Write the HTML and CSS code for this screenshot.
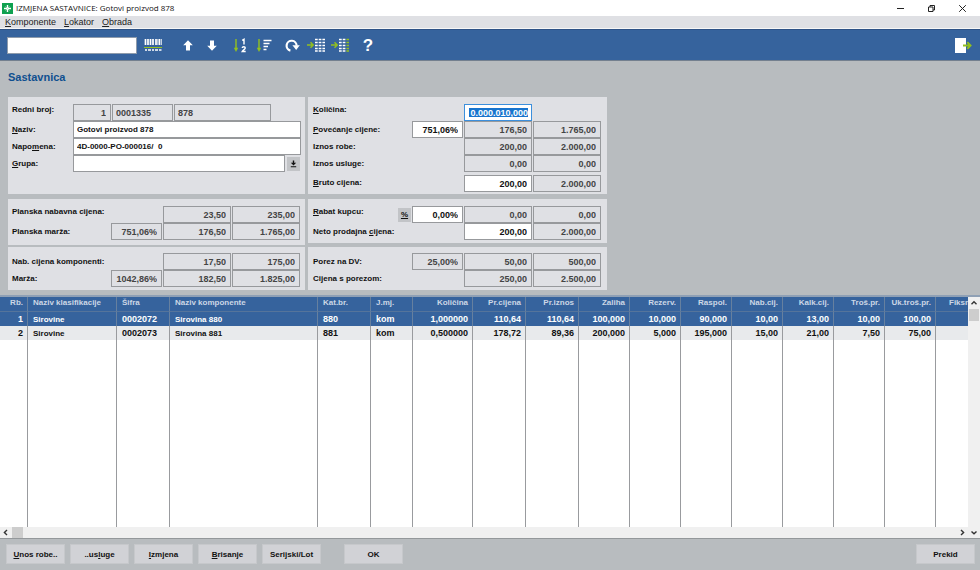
FILE: index.html
```
<!DOCTYPE html>
<html lang="hr">

<head>
  <meta charset="UTF-8" />
  <meta name="viewport" content="width=device-width, initial-scale=1.0" />
  <title>Izmjena sastavnice</title>
  <link rel="stylesheet" href="styles.css">
</head>

<body>
  <header class="titlebar">
    <svg class="logo" width="11" height="11" viewBox="0 0 11 11">
      <rect width="11" height="11" fill="#0fa150" />
      <path d="M5.5 2v7M2 5.5h7" stroke="#fff" stroke-width="1.4" />
      <path d="M3.6 3.6l3.8 3.8M7.4 3.6L3.6 7.4" stroke="#b5e6c8" stroke-width="0.9" />
    </svg>
    <h1>IZMJENA SASTAVNICE: Gotovi proizvod 878</h1>
    <div class="window-buttons">
      <button type="button" aria-label="Minimize">
        <svg width="9" height="9" viewBox="0 0 9 9"><path d="M1 4.5h7" stroke="#222" /></svg>
      </button>
      <button type="button" aria-label="Restore">
        <svg width="9" height="9" viewBox="0 0 9 9"><path d="M1.5 3h4.5v4.5H1.5zM3 3V1.5h4.5V6H6" fill="none" stroke="#222" /></svg>
      </button>
      <button type="button" aria-label="Close">
        <svg width="9" height="9" viewBox="0 0 9 9"><path d="M1.2 1.2l6.6 6.6M7.8 1.2L1.2 7.8" stroke="#222" /></svg>
      </button>
    </div>
  </header>

  <nav class="menubar">
    <a href="#"><u>K</u>omponente</a>
    <a href="#"><u>L</u>okator</a>
    <a href="#"><u>O</u>brada</a>
  </nav>

  <div class="toolbar">
    <input type="text" class="search" aria-label="Lokator">
    <div class="tools">
      <button type="button" aria-label="Barkod">
        <svg width="18" height="12" viewBox="0 0 18 12">
          <path d="M1.5 0v6M4 0v6M6.5 0v6M9 0v6M12 0v6M15.5 0v6" stroke="#fff" stroke-width="1.7" />
          <path d="M13.8 0v6M17.4 0v6" stroke="#fff" stroke-width="0.8" />
          <path d="M0 8.5h18" stroke="#93c01f" stroke-width="1" />
          <path d="M1 11h2M4 11h3M8 11h2M11 11h3M15 11h2.5" stroke="#fff" stroke-width="1.6" />
        </svg>
      </button>
    </div>
    <div class="tools tools-move">
      <button type="button" aria-label="Gore">
        <svg width="10" height="11" viewBox="0 0 10 11"><path d="M5 0.3L9.8 5.2H7v5.3H3V5.2H0.2z" fill="#fff" /></svg>
      </button>
      <button type="button" aria-label="Dolje">
        <svg width="10" height="11" viewBox="0 0 10 11"><path d="M5 10.7L0.2 5.8H3V0.5h4v5.3h2.8z" fill="#fff" /></svg>
      </button>
    </div>
    <div class="tools">
      <button type="button" aria-label="Sortiraj po broju">
        <svg width="14" height="15" viewBox="0 0 14 15">
          <path d="M3 1v11" stroke="#93c01f" stroke-width="1.4" />
          <path d="M0.8 9.8h4.4L3 14z" fill="#93c01f" />
          <path d="M9.2 2.3l1.8-1v5.2M9.2 10c.2-1.6 3.2-1.6 3 .1-.2 1.2-2.2 2-3 3.4h3.5" fill="none" stroke="#fff" stroke-width="1.4" />
        </svg>
      </button>
      <button type="button" aria-label="Sortiraj">
        <svg width="16" height="15" viewBox="0 0 16 15">
          <path d="M3 1v11" stroke="#93c01f" stroke-width="1.4" />
          <path d="M0.8 9.8h4.4L3 14z" fill="#93c01f" />
          <path d="M7.5 2.5h8M7.5 5.5h6M7.5 8.5h4.5M7.5 11.5h3" stroke="#fff" stroke-width="1.5" />
        </svg>
      </button>
    </div>
    <div class="tools">
      <button type="button" aria-label="Osvje&zcaron;i">
        <svg width="15" height="13" viewBox="0 0 15 13">
          <path d="M5.4 11.6A5 5 0 1 1 11.6 6.8" fill="none" stroke="#fff" stroke-width="2.2" />
          <path d="M7.4 6.2h7.4L11.2 11z" fill="#fff" />
        </svg>
      </button>
      <button type="button" aria-label="Uvoz">
        <svg width="18" height="14" viewBox="0 0 18 14">
          <path d="M0 7h5.5M3.5 4.3L6.2 7 3.5 9.7" fill="none" stroke="#93c01f" stroke-width="1.5" />
          <path d="M8 1.5h10M8 4.5h10M8 7.5h10M8 10.5h10M8 13h10" stroke="#fff" stroke-width="1.6" stroke-dasharray="2.7 1" />
        </svg>
      </button>
      <button type="button" aria-label="Uvoz odabranih">
        <svg width="18" height="14" viewBox="0 0 18 14">
          <path d="M0 7h5.5M3.5 4.3L6.2 7 3.5 9.7" fill="none" stroke="#93c01f" stroke-width="1.5" />
          <path d="M8 1.5h6.4M8 4.5h6.4M8 7.5h6.4M8 10.5h6.4M8 13h6.4" stroke="#fff" stroke-width="1.6" stroke-dasharray="2.7 1" />
          <path d="M15.4 1.5H18M15.4 4.5H18M15.4 7.5H18M15.4 10.5H18M15.4 13H18" stroke="#93c01f" stroke-width="1.6" />
        </svg>
      </button>
    </div>
    <div class="tools">
      <button type="button" class="help" aria-label="Pomo&cacute;">?</button>
    </div>
    <div class="tools tools-exit">
      <button type="button" aria-label="Izlaz">
        <svg width="17" height="15" viewBox="0 0 17 15">
          <rect width="11" height="15" fill="#fff" />
          <path d="M8 7.5h7.5M12.3 4.2l3.3 3.3-3.3 3.3" fill="none" stroke="#93c01f" stroke-width="1.8" />
        </svg>
      </button>
    </div>
  </div>

  <main>
    <h2>Sastavnica</h2>

    <form class="panels">
      <div class="side">
        <section class="panel panel-top item">
          <label class="raised" for="rb">Redni broj:</label>
          <div class="codes">
            <input id="rb" class="num" type="text" value="1" readonly>
            <input class="code" type="text" value="0001335" aria-label="Šifra" readonly>
            <input class="code" type="text" value="878" aria-label="Kat.br." readonly>
          </div>
          <label for="naziv"><u>N</u>aziv:</label>
          <input id="naziv" type="text" value="Gotovi proizvod 878">
          <label for="napomena">Napo<u>m</u>ena:</label>
          <input id="napomena" type="text" value="4D-0000-PO-000016/&nbsp; 0">
          <label for="grupa"><u>G</u>rupa:</label>
          <div class="group">
            <input id="grupa" type="text">
            <button type="button" aria-label="Odaberi grupu">
              <svg width="7" height="8" viewBox="0 0 7 8"><path d="M2.8 0.5h1.4v2.3h2L3.5 5.6 0.8 2.8h2zM0.8 6.2h5.4v1H0.8z" fill="#111" /></svg>
            </button>
          </div>
        </section>

        <section class="panel panel-plan amounts">
          <label class="raised" for="pnc">Planska nabavna cijena:</label>
          <input id="pnc" class="num price" type="text" value="23,50" readonly>
          <input class="num" type="text" value="235,00" aria-label="Planska nabavna cijena iznos" readonly>
          <label for="pm">Planska marža:</label>
          <input id="pm" class="num" type="text" value="751,06%" readonly>
          <input class="num" type="text" value="176,50" aria-label="Planska marža cijena" readonly>
          <input class="num" type="text" value="1.765,00" aria-label="Planska marža iznos" readonly>
        </section>

        <section class="panel amounts">
          <label for="nck">Nab. cijena komponenti:</label>
          <input id="nck" class="num price" type="text" value="17,50" readonly>
          <input class="num" type="text" value="175,00" aria-label="Nab. cijena iznos" readonly>
          <label for="marza">Marža:</label>
          <input id="marza" class="num" type="text" value="1042,86%" readonly>
          <input class="num" type="text" value="182,50" aria-label="Marža cijena" readonly>
          <input class="num" type="text" value="1.825,00" aria-label="Marža iznos" readonly>
        </section>
      </div>

      <div class="side">
        <section class="panel panel-top amounts">
          <label class="raised" for="kol"><u>K</u>oličina:</label>
          <input id="kol" class="num price active" type="text" value="0.000.010,000">
          <label for="pov"><u>P</u>ovećanje cijene:</label>
          <input id="pov" class="num" type="text" value="751,06%">
          <input class="num" type="text" value="176,50" aria-label="Povećanje cijena" readonly>
          <input class="num" type="text" value="1.765,00" aria-label="Povećanje iznos" readonly>
          <label for="robe">Iznos robe:</label>
          <input id="robe" class="num price" type="text" value="200,00" readonly>
          <input class="num" type="text" value="2.000,00" aria-label="Iznos robe ukupno" readonly>
          <label for="usluge">Iznos usluge:</label>
          <input id="usluge" class="num price" type="text" value="0,00" readonly>
          <input class="num" type="text" value="0,00" aria-label="Iznos usluge ukupno" readonly>
          <label for="bruto"><u>B</u>ruto cijena:</label>
          <input id="bruto" class="num price" type="text" value="200,00">
          <input class="num" type="text" value="2.000,00" aria-label="Bruto iznos" readonly>
        </section>

        <section class="panel amounts discount">
          <label class="raised" for="rabat"><u>R</u>abat kupcu:</label>
          <button type="button" class="percent"><u>%</u></button>
          <input id="rabat" class="num" type="text" value="0,00%">
          <input class="num" type="text" value="0,00" aria-label="Rabat cijena" readonly>
          <input class="num" type="text" value="0,00" aria-label="Rabat iznos" readonly>
          <label class="wide" for="neto">Neto prodajna <u>c</u>ijena:</label>
          <input id="neto" class="num price" type="text" value="200,00">
          <input class="num" type="text" value="2.000,00" aria-label="Neto iznos" readonly>
        </section>

        <section class="panel amounts">
          <label for="porez">Porez na DV:</label>
          <input id="porez" class="num" type="text" value="25,00%" readonly>
          <input class="num" type="text" value="50,00" aria-label="Porez cijena" readonly>
          <input class="num" type="text" value="500,00" aria-label="Porez iznos" readonly>
          <label for="cijena">Cijena s porezom:</label>
          <input id="cijena" class="num price" type="text" value="250,00" readonly>
          <input class="num" type="text" value="2.500,00" aria-label="Iznos s porezom" readonly>
        </section>
      </div>
    </form>
  </main>

  <div class="grid-area">
    <div class="grid-scroll">
      <table>
        <colgroup>
          <col class="w-rb"><col class="w-class"><col class="w-price"><col class="w-name"><col class="w-price">
          <col class="w-unit"><col class="w-qty"><col class="w-price"><col class="w-price"><col class="w-amount">
          <col class="w-amount"><col class="w-amount"><col class="w-amount"><col class="w-amount"><col class="w-amount">
          <col class="w-amount"><col>
        </colgroup>
        <thead>
          <tr>
            <th class="num">Rb.</th>
            <th>Naziv klasifikacije</th>
            <th>Šifra</th>
            <th>Naziv komponente</th>
            <th>Kat.br.</th>
            <th>J.mj.</th>
            <th class="num">Količina</th>
            <th class="num">Pr.cijena</th>
            <th class="num">Pr.iznos</th>
            <th class="num">Zaliha</th>
            <th class="num">Rezerv.</th>
            <th class="num">Raspol.</th>
            <th class="num">Nab.cij.</th>
            <th class="num">Kalk.cij.</th>
            <th class="num">Troš.pr.</th>
            <th class="num">Uk.troš.pr.</th>
            <th class="cut">Fiksni</th>
          </tr>
        </thead>
        <tbody>
          <tr class="selected">
            <td class="num">1</td>
            <td class="name">Sirovine</td>
            <td>0002072</td>
            <td class="name">Sirovina 880</td>
            <td>880</td>
            <td>kom</td>
            <td class="num">1,000000</td>
            <td class="num">110,64</td>
            <td class="num">110,64</td>
            <td class="num">100,000</td>
            <td class="num">10,000</td>
            <td class="num">90,000</td>
            <td class="num">10,00</td>
            <td class="num">13,00</td>
            <td class="num">10,00</td>
            <td class="num">100,00</td>
            <td></td>
          </tr>
          <tr class="even">
            <td class="num">2</td>
            <td class="name">Sirovine</td>
            <td>0002073</td>
            <td class="name">Sirovina 881</td>
            <td>881</td>
            <td>kom</td>
            <td class="num">0,500000</td>
            <td class="num">178,72</td>
            <td class="num">89,36</td>
            <td class="num">200,000</td>
            <td class="num">5,000</td>
            <td class="num">195,000</td>
            <td class="num">15,00</td>
            <td class="num">21,00</td>
            <td class="num">7,50</td>
            <td class="num">75,00</td>
            <td></td>
          </tr>
          <tr class="filler">
            <td></td><td></td><td></td><td></td><td></td><td></td><td></td><td></td><td></td>
            <td></td><td></td><td></td><td></td><td></td><td></td><td></td><td></td>
          </tr>
        </tbody>
      </table>
    </div>
    <div class="vscroll">
      <svg width="12" height="12" viewBox="0 0 12 12"><path d="M3.5 7.2L6 4.8l2.5 2.4" fill="none" stroke="#333" stroke-width="1.4" /></svg>
      <div class="thumb"></div>
    </div>
    <div class="hscroll">
      <svg width="12" height="11" viewBox="0 0 12 11"><path d="M7 3L4.4 5.5 7 8" fill="none" stroke="#333" stroke-width="1.4" /></svg>
      <div class="thumb"></div>
      <svg class="end" width="12" height="11" viewBox="0 0 12 11"><path d="M5 3l2.6 2.5L5 8" fill="none" stroke="#333" stroke-width="1.4" /></svg>
    </div>
    <div class="corner">
      <svg width="12" height="11" viewBox="0 0 12 11"><path d="M3.5 4.4L6 6.8l2.5-2.4" fill="none" stroke="#333" stroke-width="1.4" /></svg>
    </div>
  </div>

  <footer class="buttons">
    <button type="button"><u>U</u>nos robe..</button>
    <button type="button">..us<u>l</u>uge</button>
    <button type="button"><u>I</u>zmjena</button>
    <button type="button"><u>B</u>risanje</button>
    <button type="button">Serijski/Lot</button>
    <button type="button" class="ok">OK</button>
    <button type="button" class="cancel">Prekid</button>
  </footer>
</body>

</html>
```
FILE: styles.css
```
* {
  box-sizing: border-box;
}

body {
  display: flex;
  flex-direction: column;
  height: 100vh;
  margin: 0;
  overflow: hidden;
  background: #b8bcbf;
  color: #111;
  font: bold 8px/11px "Liberation Sans", Arial, sans-serif;
}

button,
input {
  margin: 0;
  padding: 0;
  border: none;
  border-radius: 0;
  font: inherit;
  color: inherit;
}

button {
  display: flex;
  align-items: center;
  justify-content: center;
  background: none;
}

svg {
  display: block;
}

/* Window title and menu */
.titlebar {
  display: flex;
  align-items: center;
  height: 16px;
  padding: 0 2px;
  background: #fff;
}

.titlebar h1 {
  flex: 1;
  margin: 0 0 0 3px;
  font: 8px/16px "Open Sans", "Segoe UI", sans-serif;
}

.window-buttons {
  display: flex;
}

.window-buttons button {
  width: 31px;
  height: 16px;
}

.menubar {
  display: flex;
  gap: 8px;
  padding: 0 5px;
  border-bottom: 1px solid #f6f6f6;
  background: #dfe0e4;
  font-size: 9px;
  font-weight: normal;
  line-height: 12px;
}

.menubar a {
  color: #222;
  text-decoration: none;
}

/* Toolbar */
.toolbar {
  display: flex;
  align-items: center;
  height: 32px;
  padding: 0 5px 0 7px;
  border-top: 1px solid #2d5286;
  border-bottom: 1px solid #74808f;
  background: #36639d;
}

.search {
  width: 130px;
  height: 17px;
  padding: 0 4px;
  border: 1px solid #8e9bab;
  background: #fff;
}

.tools {
  display: flex;
  margin-left: 4px;
}

.tools-move {
  margin-left: 11px;
}

.tools-exit {
  margin-left: auto;
}

.tools button {
  width: 24px;
  height: 24px;
}

.tools .help {
  color: #fff;
  font-size: 17px;
}

h2 {
  margin: 0;
  padding: 10px 8px;
  color: #0f4f8f;
  font-size: 11px;
  line-height: 13px;
}

/* Form panels */
main {
  padding-bottom: 3px;
}

.panels {
  display: flex;
  gap: 3px;
  width: max-content;
  margin: 3px 0 0 8px;
}

.side {
  display: flex;
  flex-direction: column;
}

.panel {
  display: grid;
  grid-auto-rows: 17px;
  column-gap: 1px;
  align-items: center;
  margin-bottom: 2px;
  padding: 6px 4px 3px;
  background: #dfe0e4;
}

.side:last-child .panel {
  padding-right: 6px;
  padding-left: 5px;
}

.panel-top {
  height: 97px;
  margin-bottom: 5px;
  padding-top: 7px;
}

.panel-top.amounts {
  grid-template-rows: repeat(4, 17px) 20px;
  align-items: end;
}

.panel-top.amounts label {
  align-self: center;
}

.panel-plan {
  padding-top: 7px;
  padding-bottom: 5px;
}

.discount {
  margin-bottom: 4px;
  padding-top: 7px;
}

.item {
  grid-template-columns: 60px 228px;
}

.amounts {
  grid-template-columns: 98px 51px 68px 68px;
}

.amounts label {
  grid-column: 1;
  white-space: nowrap;
}

.amounts .price {
  grid-column: 3;
}

.panel .raised,
.panel-top.amounts .raised {
  align-self: start;
}

.panel input {
  width: 100%;
  min-width: 0;
  height: 17px;
  padding: 0 3px;
  border: 1px solid #97999c;
  background: #fff;
}

.panel input:read-only {
  background: #dfe0e4;
  color: #444;
}

.num,
.panel input.num {
  text-align: right;
}

.panel input.num,
.panel input.code {
  padding-right: 4px;
  font-size: 9px;
}

.panel input.active {
  padding: 3px 3px 3px 4px;
  border-color: #3c8fdc;
  background: linear-gradient(#1874cd, #1874cd) content-box, #fff;
  color: #fff;
  outline: none;
}

.codes {
  display: grid;
  grid-template-columns: 38px 61px 97px;
  gap: 1px;
}

.group {
  display: flex;
  align-items: center;
  gap: 2px;
}

.group input {
  width: 212px;
}

.group button,
.percent {
  width: 13px;
  height: 14px;
  background: #c2c4c7;
}

.panels .discount {
  grid-template-columns: 84px 13px 51px 68px 68px;
}

.discount .wide {
  grid-column: 1 / 4;
}

.discount .price {
  grid-column: 4;
}

/* Components grid */
.grid-area {
  display: grid;
  flex: 1;
  grid-template-columns: 1fr 12px;
  grid-template-rows: 1fr 11px;
  min-height: 0;
  border-top: 2px solid #8fa0b5;
  border-bottom: 1px solid #94989b;
  background: #fff;
}

.grid-scroll {
  min-width: 0;
  min-height: 0;
  overflow: hidden;
}

table {
  width: 100%;
  height: 100%;
  border-collapse: separate;
  border-spacing: 0;
  table-layout: fixed;
}

th,
td {
  height: 14px;
  padding: 0 4px 0 5px;
  overflow: hidden;
  border-right: 1px solid #999b9e;
  text-align: left;
  white-space: nowrap;
}

td {
  font-size: 9px;
}

td.name {
  font-size: 8px;
}

th:last-child,
td:last-child {
  border-right: none;
}

th {
  height: 15px;
  border-bottom: 1px solid #55749b;
  background: #36639d;
  color: #ccd7e6;
  vertical-align: top;
}

th.cut {
  padding: 0 0 0 13px;
}

.selected td {
  background: #36639d;
  color: #fff;
}

.selected td,
th {
  border-right-color: #66809f;
}

.even td {
  background: #e8eaec;
}

.filler td {
  height: auto;
}

.w-rb {
  width: 28px;
}

.w-class {
  width: 89px;
}

.w-name {
  width: 148px;
}

.w-unit {
  width: 42px;
}

.w-qty {
  width: 60px;
}

.w-price {
  width: 53px;
}

.w-amount {
  width: 51px;
}

.vscroll,
.hscroll,
.corner {
  background: #f0f0f0;
}

.vscroll .thumb {
  height: 12px;
  margin: 0 1px;
  background: #cdcdcd;
}

.hscroll {
  display: flex;
}

.hscroll .thumb {
  width: 11px;
  background: #cdcdcd;
}

.hscroll .end {
  margin-left: auto;
}

/* Bottom buttons */
.buttons {
  display: flex;
  gap: 5px;
  padding: 5px 5px 6px 6px;
}

.buttons button {
  width: 59px;
  height: 20px;
  border: 1px solid #c6c8cb;
  background: #d1d2d6;
}

.buttons .ok {
  margin-left: 18px;
}

.buttons .cancel {
  margin-left: auto;
}
```
